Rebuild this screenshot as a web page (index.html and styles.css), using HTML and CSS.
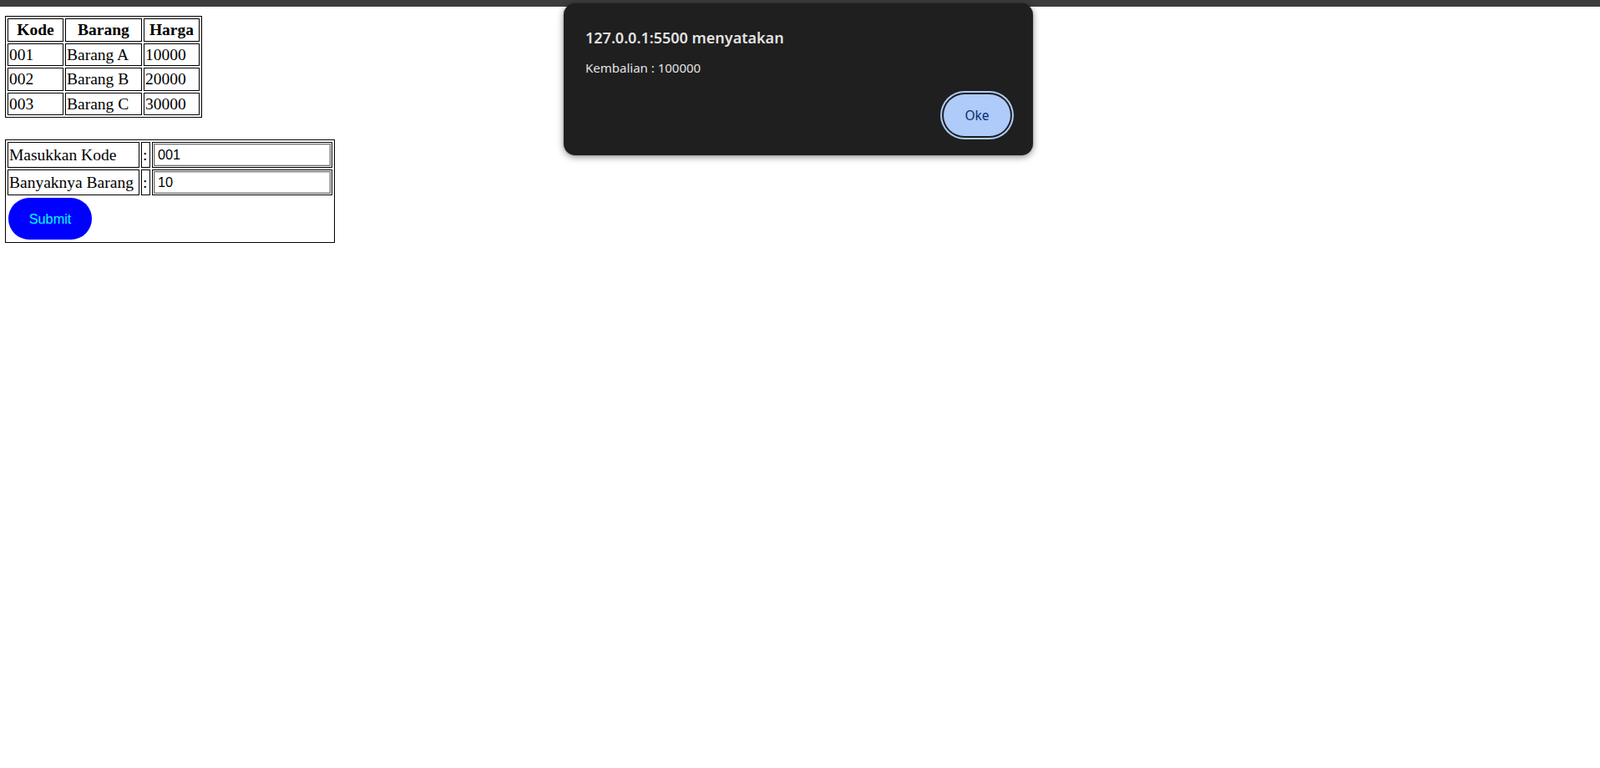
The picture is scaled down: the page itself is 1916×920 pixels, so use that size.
FILE: index.html
```html
<!DOCTYPE html>
<html lang="id">
<head>
<meta charset="utf-8">
<title>Barang</title>
<link rel="stylesheet" href="styles.css">
</head>
<body>
<div class="topbar"></div>
<main class="page">
  <table class="tbl items">
    <colgroup>
      <col class="w-kode"><col class="w-barang"><col class="w-harga">
    </colgroup>
    <tr><th>Kode</th><th>Barang</th><th>Harga</th></tr>
    <tr><td>001</td><td>Barang A</td><td>10000</td></tr>
    <tr><td>002</td><td>Barang B</td><td>20000</td></tr>
    <tr><td>003</td><td>Barang C</td><td>30000</td></tr>
  </table>

  <table class="tbl form">
    <colgroup>
      <col class="w-label"><col class="w-colon"><col class="w-input">
    </colgroup>
    <tr>
      <td>Masukkan Kode</td><td>:</td>
      <td class="in-cell"><input class="field" type="text" value="001"></td>
    </tr>
    <tr>
      <td>Banyaknya Barang</td><td>:</td>
      <td class="in-cell"><input class="field" type="text" value="10"></td>
    </tr>
    <tr>
      <td class="btn-cell" colspan="3"><button class="submit" type="button">Submit</button></td>
    </tr>
  </table>
</main>

<div class="dialog" role="alertdialog">
  <div class="dlg-title">127.0.0.1:5500 menyatakan</div>
  <div class="dlg-msg">Kembalian : 100000</div>
  <div class="dlg-actions">
    <button class="dlg-ok" type="button">Oke</button>
  </div>
</div>
</body>
</html>
```

FILE: styles.css
```css
html, body {
  margin: 0;
  padding: 0;
  background: #ffffff;
}

.topbar {
  height: 8px;
  background: #3c3c3c;
}

.page {
  padding: 11px 6px;
  display: flex;
  flex-direction: column;
  align-items: flex-start;
  gap: 26px;
}

.tbl {
  border: 1px solid #000;
  border-spacing: 2px;
  table-layout: fixed;
  font-family: "Liberation Serif", "Times New Roman", serif;
  font-size: 19.5px;
  line-height: 23.5px;
  color: #000;
}

.tbl th,
.tbl td {
  border: 1px solid #000;
  padding: 1px;
  box-sizing: border-box;
  white-space: nowrap;
}

.tbl th {
  font-weight: bold;
  text-align: center;
}

.tbl td {
  text-align: left;
}

.items { width: 236px; }
.w-kode { width: 67px; }
.w-barang { width: 92px; }
.w-harga { width: 67px; }

.form { width: 395px; }
.w-label { width: 158px; }
.w-colon { width: 11px; }
.w-input { width: 216px; }

.in-cell {
  padding: 1px 1px 2px 1px;
}

.field {
  display: block;
  box-sizing: border-box;
  width: 100%;
  height: 27px;
  margin: 0;
  padding: 0 4px;
  border: 1px solid #6f6f6f;
  box-shadow: inset 0 0 0 1px #cfcfcf;
  font-family: "Liberation Sans", Arial, sans-serif;
  font-size: 16.3px;
  color: #000;
  background: #fff;
}

.tbl td.btn-cell {
  border: none;
  padding: 1px;
}

.submit {
  display: block;
  width: 100px;
  height: 50px;
  border: none;
  border-radius: 25px;
  background: #0000ff;
  color: #00ffff;
  font-family: "Liberation Sans", Arial, sans-serif;
  font-size: 16.3px;
  padding: 0;
}

.dialog {
  position: absolute;
  left: 675px;
  top: 4px;
  width: 562px;
  height: 182px;
  box-sizing: border-box;
  padding: 29px 23px 19px 26px;
  background: #1f1f1f;
  border-radius: 14px;
  box-shadow: 0 2px 8px rgba(0, 0, 0, 0.45), 0 0 2px rgba(0, 0, 0, 0.3);
  display: flex;
  flex-direction: column;
  font-family: "Noto Sans", "Open Sans", sans-serif;
  color: #e3e3e3;
}

.dlg-title {
  font-size: 18px;
  font-weight: 600;
  line-height: 24px;
}

.dlg-msg {
  margin-top: 14px;
  font-size: 15px;
  line-height: 20px;
}

.dlg-actions {
  margin-top: auto;
  display: flex;
  justify-content: flex-end;
}

.dlg-ok {
  width: 80px;
  height: 50px;
  margin: 4px;
  border: none;
  border-radius: 25px;
  background: #aecbfa;
  color: #062e6f;
  font-family: "Noto Sans", "Open Sans", sans-serif;
  font-size: 15.5px;
  box-shadow: 0 0 0 2px #1f1f1f, 0 0 0 4px #aecbfa;
  padding: 0;
}
```
